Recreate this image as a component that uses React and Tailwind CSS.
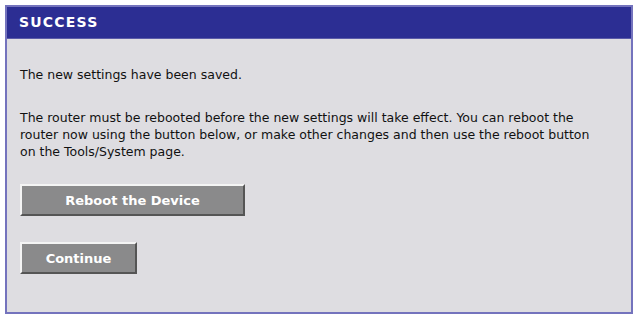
export default function App() {
  return (
    <div className="w-[635px] h-[317px] bg-white pt-[5px] pl-[5px]" style={{ fontFamily: '"DejaVu Sans", Tahoma, sans-serif' }}>
      <div className="w-[628px] h-[309px] border-2 border-[#7473bd] bg-[#dedde1] flex flex-col">
        {/* header */}
        <div className="h-[32px] bg-[#2c2e93] flex items-center pl-[12px] border-b border-[#5b5ba8]">
          <span className="text-white font-bold text-[14px] tracking-[1.2px]">SUCCESS</span>
        </div>

        <div className="pl-[13px] text-[12.5px] text-[#111] leading-[17px]">
          <p className="mt-[27px]">The new settings have been saved.</p>
          <p className="mt-[26px] w-[578px]">
            The router must be rebooted before the new settings will take effect. You can reboot the router now using the button below, or make other changes and then use the reboot button on the Tools/System page.
          </p>

          <button className="mt-[24px] block w-[225px] h-[32px] bg-[#8a8a8b] text-white font-bold text-[13px] border-2 border-t-[#f4f4f4] border-l-[#f4f4f4] border-r-[#555] border-b-[#555]">
            Reboot the Device
          </button>
          <button className="mt-[26px] block w-[117px] h-[32px] bg-[#8a8a8b] text-white font-bold text-[13px] border-2 border-t-[#f4f4f4] border-l-[#f4f4f4] border-r-[#555] border-b-[#555]">
            Continue
          </button>
        </div>
      </div>
    </div>
  )
}
